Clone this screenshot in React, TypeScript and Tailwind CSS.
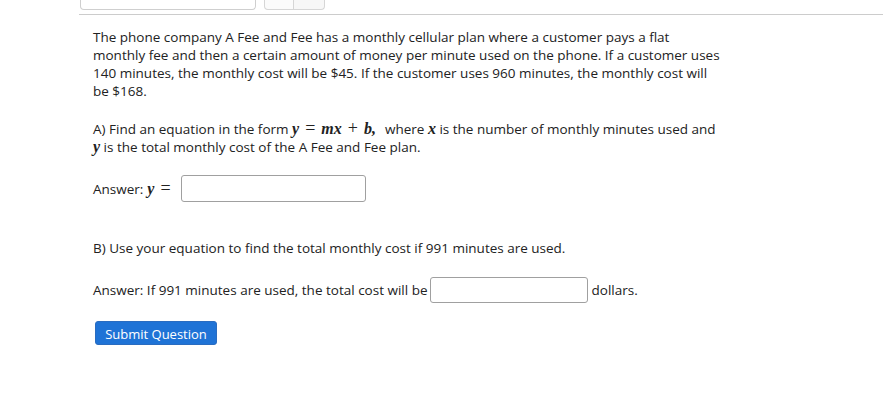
export default function App() {
  const math = "font-['Liberation_Serif',serif] italic font-bold text-[16px] leading-[18px] text-[#222]";
  const op = "not-italic font-normal inline-block mx-[6px]";
  return (
    <div className="w-[883px] h-[400px] bg-white font-['Open_Sans',sans-serif] text-[13.5px] leading-[18px] text-[#222] overflow-hidden">
      <div className="flex h-[14px] pl-[80px]">
        <div className="w-[176px] h-[10px] border border-t-0 border-[#cfcfcf] rounded-b-[4px]" />
        <div className="ml-[8px] flex h-[10px]">
          <div className="w-[30px] border border-t-0 border-[#d6d6d6] rounded-bl-[4px] bg-[#fbfbfb]" />
          <div className="w-[31px] border border-t-0 border-l-0 border-[#d6d6d6] rounded-br-[4px] bg-[#f7f7f7]" />
        </div>
      </div>
      <div className="ml-[79px] h-px bg-[#cccccc]" />

      <div className="pl-[93px] pt-[13px]">
        <p className="whitespace-nowrap">
          The phone company A Fee and Fee has a monthly cellular plan where a customer pays a flat
          <br />
          monthly fee and then a certain amount of money per minute used on the phone. If a customer uses
          <br />
          140 minutes, the monthly cost will be $45. If the customer uses 960 minutes, the monthly cost will
          <br />
          be $168.
        </p>

        <p className="mt-[19px] whitespace-nowrap">
          A) Find an equation in the form{" "}
          <span className={math}>
            y<span className={`${op} text-[18px] leading-[18px]`}>=</span>mx
            <span className={`${op} text-[18px] leading-[18px]`}>+</span>b,
          </span>
          <span className="inline-block w-[9px]" />
          where <span className={math}>x</span> is the number of monthly minutes used and
          <br />
          <span className={math}>y</span> is the total monthly cost of the A Fee and Fee plan.
        </p>

        <div className="mt-[19px] flex items-center h-[27px]">
          <span>Answer:</span>
          <span className={`${math} ml-[4px]`}>
            y<span className="not-italic font-normal text-[18px] leading-[18px] inline-block ml-[6px]">=</span>
          </span>
          <input
            type="text"
            className="ml-[10px] w-[185px] h-[27px] border border-[#a0a0a0] rounded-[3px] bg-white outline-none"
          />
        </div>

        <p className="mt-[37px]">B) Use your equation to find the total monthly cost if 991 minutes are used.</p>

        <div className="mt-[20px] flex items-center h-[26px]">
          <span>Answer: If 991 minutes are used, the total cost will be</span>
          <input
            type="text"
            className="ml-[2px] w-[158px] h-[26px] border border-[#a0a0a0] rounded-[3px] bg-white outline-none"
          />
          <span className="ml-[4px]">dollars.</span>
        </div>

        <button
          type="button"
          className="mt-[18px] ml-[2px] w-[122px] h-[24px] bg-[#1f73d6] text-white text-[13px] leading-[24px] rounded-[3px] border border-[#2a6cc0]"
        >
          Submit Question
        </button>
      </div>
    </div>
  );
}
